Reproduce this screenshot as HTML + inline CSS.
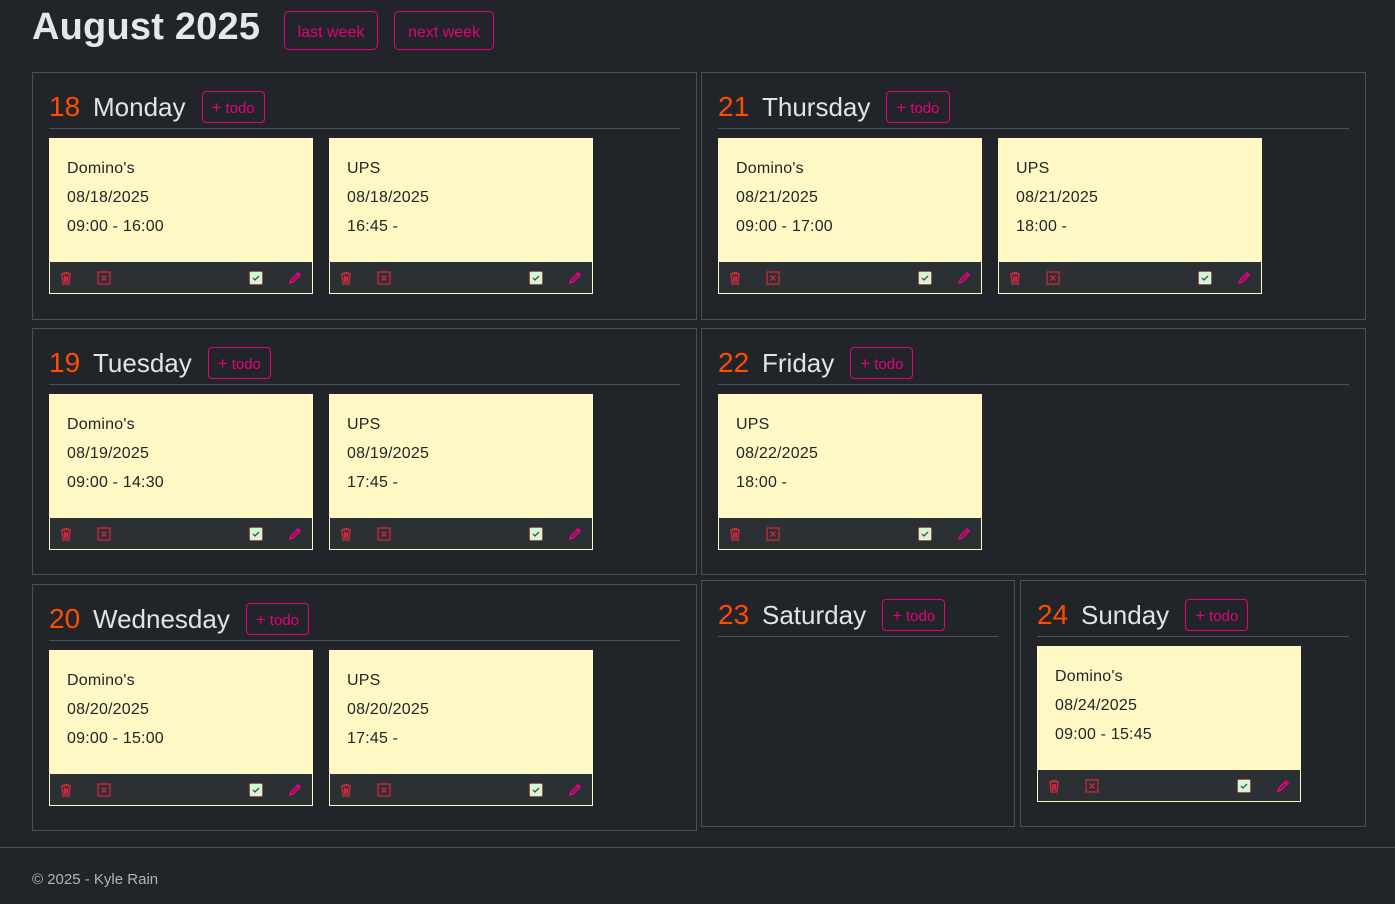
<!DOCTYPE html>
<html><head><meta charset="utf-8"><style>
*{box-sizing:border-box;margin:0;padding:0}
html,body{width:1395px;height:904px;overflow:hidden}
body{background:#212529;font-family:"Liberation Sans","DejaVu Sans",sans-serif;position:relative;color:#dee2e6}
h1{position:absolute;left:32px;top:6px;font-size:38px;font-weight:bold;color:#e3e8ec;letter-spacing:0.2px}
.nav{position:absolute;top:11px;height:39px;border:1px solid #e6007e;border-radius:5px;color:#e6007e;font-size:16px;line-height:41px;text-align:center}
.sec{position:absolute;border:1px solid #495057;padding:0 16px}
.hd{display:flex;align-items:center;padding-top:18px;height:56px;padding-bottom:5px;border-bottom:1px solid #495057}
.num{color:#ff4d00;font-size:28px;margin-right:16px;width:28px}
.day{color:#dde4ea;font-size:26px;margin-right:16px}
.btn{border:1px solid #e6007e;border-radius:4px;color:#e6007e;font-size:15px;height:32px;line-height:31px;padding:0 9px}
.btn b{font-weight:normal;font-size:17px;margin-right:4px}
.cards{display:flex;gap:16px;margin-top:9px}
.card{width:264px;height:156px;border:1px solid #fff8c4;background:#fff8c4;color:#212529;display:flex;flex-direction:column}
.txt{flex:1;padding:15px 0 0 17px;font-size:16px;line-height:29px;letter-spacing:0.2px}
.ft{height:31px;background:#2b3035;position:relative}
.ft svg{position:absolute;top:9px}
footer{position:absolute;left:0;top:847px;width:1395px;height:57px;border-top:1px solid #495057;padding:23px 32px;font-size:15px;color:#adb5bd}
</style></head><body>
<h1>August 2025</h1>
<div class="nav" style="left:284px;width:94px">last week</div>
<div class="nav" style="left:394px;width:100px">next week</div>

<svg width="0" height="0" style="position:absolute"><defs>
<g id="tr"><path d="M2 3h10M5 3V1.5h4V3M3 3l1 10h6l1-10M5.5 5v6.5M7 5v6.5M8.5 5v6.5" stroke="#d0293b" stroke-width="1.3" fill="none"/></g>
<g id="xb"><rect x="1" y="1" width="12" height="12" stroke="#d0293b" stroke-width="1.3" fill="none"/><path d="M4.5 4.5l5 5M9.5 4.5l-5 5" stroke="#d0293b" stroke-width="1.3"/></g>
<g id="ck"><rect x="0.5" y="0.5" width="13" height="13" rx="1" fill="#d6f5d0" stroke="#c0293b" stroke-width="0.6"/><path d="M4 7l2 2 4-4" stroke="#3a5060" stroke-width="1.3" fill="none"/></g>
<g id="pn"><path d="M2 12l1-3 7-7 2 2-7 7zM8.5 3.5l2 2M2 12l2-1" stroke="#e6007e" stroke-width="1.6" fill="none"/></g>
</defs></svg>

<div class="sec" style="left:32px;top:72px;width:665px;height:248px">
<div class="hd"><span class="num">18</span><span class="day">Monday</span><span class="btn"><b>+</b>todo</span></div>
<div class="cards">
<div class="card"><div class="txt">Domino's<br>08/18/2025<br>09:00 - 16:00</div><div class="ft"><svg style="left:9px" width="14" height="14"><use href="#tr"/></svg><svg style="left:47px" width="14" height="14"><use href="#xb"/></svg><svg style="left:199px" width="14" height="14"><use href="#ck"/></svg><svg style="left:238px" width="14" height="14"><use href="#pn"/></svg></div></div>
<div class="card"><div class="txt">UPS<br>08/18/2025<br>16:45 -</div><div class="ft"><svg style="left:9px" width="14" height="14"><use href="#tr"/></svg><svg style="left:47px" width="14" height="14"><use href="#xb"/></svg><svg style="left:199px" width="14" height="14"><use href="#ck"/></svg><svg style="left:238px" width="14" height="14"><use href="#pn"/></svg></div></div>
</div></div>

<div class="sec" style="left:701px;top:72px;width:665px;height:248px">
<div class="hd"><span class="num">21</span><span class="day">Thursday</span><span class="btn"><b>+</b>todo</span></div>
<div class="cards">
<div class="card"><div class="txt">Domino's<br>08/21/2025<br>09:00 - 17:00</div><div class="ft"><svg style="left:9px" width="14" height="14"><use href="#tr"/></svg><svg style="left:47px" width="14" height="14"><use href="#xb"/></svg><svg style="left:199px" width="14" height="14"><use href="#ck"/></svg><svg style="left:238px" width="14" height="14"><use href="#pn"/></svg></div></div>
<div class="card"><div class="txt">UPS<br>08/21/2025<br>18:00 -</div><div class="ft"><svg style="left:9px" width="14" height="14"><use href="#tr"/></svg><svg style="left:47px" width="14" height="14"><use href="#xb"/></svg><svg style="left:199px" width="14" height="14"><use href="#ck"/></svg><svg style="left:238px" width="14" height="14"><use href="#pn"/></svg></div></div>
</div></div>

<div class="sec" style="left:32px;top:328px;width:665px;height:247px">
<div class="hd"><span class="num">19</span><span class="day">Tuesday</span><span class="btn"><b>+</b>todo</span></div>
<div class="cards">
<div class="card"><div class="txt">Domino's<br>08/19/2025<br>09:00 - 14:30</div><div class="ft"><svg style="left:9px" width="14" height="14"><use href="#tr"/></svg><svg style="left:47px" width="14" height="14"><use href="#xb"/></svg><svg style="left:199px" width="14" height="14"><use href="#ck"/></svg><svg style="left:238px" width="14" height="14"><use href="#pn"/></svg></div></div>
<div class="card"><div class="txt">UPS<br>08/19/2025<br>17:45 -</div><div class="ft"><svg style="left:9px" width="14" height="14"><use href="#tr"/></svg><svg style="left:47px" width="14" height="14"><use href="#xb"/></svg><svg style="left:199px" width="14" height="14"><use href="#ck"/></svg><svg style="left:238px" width="14" height="14"><use href="#pn"/></svg></div></div>
</div></div>

<div class="sec" style="left:701px;top:328px;width:665px;height:247px">
<div class="hd"><span class="num">22</span><span class="day">Friday</span><span class="btn"><b>+</b>todo</span></div>
<div class="cards">
<div class="card"><div class="txt">UPS<br>08/22/2025<br>18:00 -</div><div class="ft"><svg style="left:9px" width="14" height="14"><use href="#tr"/></svg><svg style="left:47px" width="14" height="14"><use href="#xb"/></svg><svg style="left:199px" width="14" height="14"><use href="#ck"/></svg><svg style="left:238px" width="14" height="14"><use href="#pn"/></svg></div></div>
</div></div>

<div class="sec" style="left:32px;top:584px;width:665px;height:247px">
<div class="hd"><span class="num">20</span><span class="day">Wednesday</span><span class="btn"><b>+</b>todo</span></div>
<div class="cards">
<div class="card"><div class="txt">Domino's<br>08/20/2025<br>09:00 - 15:00</div><div class="ft"><svg style="left:9px" width="14" height="14"><use href="#tr"/></svg><svg style="left:47px" width="14" height="14"><use href="#xb"/></svg><svg style="left:199px" width="14" height="14"><use href="#ck"/></svg><svg style="left:238px" width="14" height="14"><use href="#pn"/></svg></div></div>
<div class="card"><div class="txt">UPS<br>08/20/2025<br>17:45 -</div><div class="ft"><svg style="left:9px" width="14" height="14"><use href="#tr"/></svg><svg style="left:47px" width="14" height="14"><use href="#xb"/></svg><svg style="left:199px" width="14" height="14"><use href="#ck"/></svg><svg style="left:238px" width="14" height="14"><use href="#pn"/></svg></div></div>
</div></div>

<div class="sec" style="left:701px;top:580px;width:314px;height:247px">
<div class="hd"><span class="num">23</span><span class="day">Saturday</span><span class="btn"><b>+</b>todo</span></div>
</div>

<div class="sec" style="left:1020px;top:580px;width:346px;height:247px">
<div class="hd"><span class="num">24</span><span class="day">Sunday</span><span class="btn"><b>+</b>todo</span></div>
<div class="cards">
<div class="card"><div class="txt">Domino's<br>08/24/2025<br>09:00 - 15:45</div><div class="ft"><svg style="left:9px" width="14" height="14"><use href="#tr"/></svg><svg style="left:47px" width="14" height="14"><use href="#xb"/></svg><svg style="left:199px" width="14" height="14"><use href="#ck"/></svg><svg style="left:238px" width="14" height="14"><use href="#pn"/></svg></div></div>
</div></div>

<footer>© 2025 - Kyle Rain</footer>
</body></html>
